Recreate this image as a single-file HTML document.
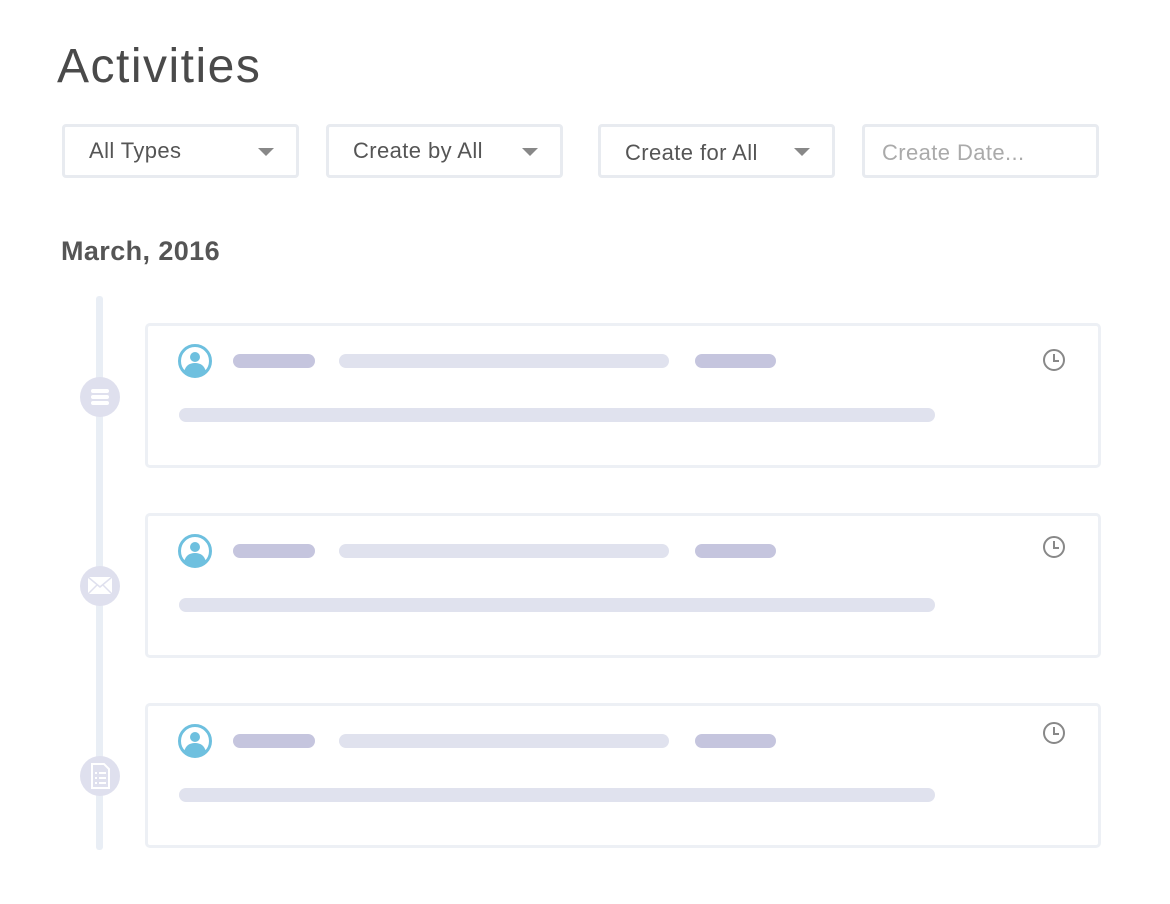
<!DOCTYPE html><html><head><style>
body{margin:0;width:1170px;height:904px;background:#fff;font-family:"Liberation Sans",sans-serif;position:relative;overflow:hidden}
.a{position:absolute}
h1{position:absolute;left:57px;top:39px;margin:0;font-size:48px;font-weight:normal;color:#4a4a4a;letter-spacing:1.5px}
.dd{position:absolute;top:124px;width:231px;height:48px;border:3px solid #e8ebf0;border-radius:4px;font-size:22px;color:#555;line-height:48px;box-sizing:content-box;letter-spacing:0.4px}
.dd span{position:absolute;left:24px}
.dd i{position:absolute;right:22px;top:21px;border-left:8px solid transparent;border-right:8px solid transparent;border-top:8px solid #888}
.card{position:absolute;left:145px;width:950px;height:139px;border:3px solid #edf0f5;border-radius:5px}
.bar{position:absolute;height:14px;border-radius:7px}
.d{background:#c5c5de}.l{background:#e0e2ee}
.dot{position:absolute;left:80px;width:40px;height:40px;border-radius:50%;background:#dfe0ee}
</style></head><body>
<h1>Activities</h1>
<div class="dd" style="left:62px"><span>All Types</span><i></i></div>
<div class="dd" style="left:326px"><span>Create by All</span><i></i></div>
<div class="dd" style="left:598px"><span style="top:2px">Create for All</span><i></i></div>
<div class="dd" style="left:862px;color:#aaa"><span style="left:17px;top:2px">Create Date...</span></div>
<div class="a" style="left:61px;top:236px;font-size:27px;font-weight:bold;color:#555;letter-spacing:0.4px">March, 2016</div>
<div class="a" style="left:96px;top:296px;width:7px;height:554px;background:#e9eef5;border-radius:3px"></div>
<div class="dot" style="top:377px"><svg width="40" height="40"><g stroke="#fff" stroke-width="4" stroke-linecap="round"><line x1="13" y1="14" x2="27" y2="14"/><line x1="13" y1="20" x2="27" y2="20"/><line x1="13" y1="26" x2="27" y2="26"/></g></svg></div>
<div class="dot" style="top:566px"><svg width="40" height="40"><rect x="8" y="11" width="24" height="17" fill="#fff"/><path d="M8 11 L20 21 L32 11 M8 28 L17 19 M32 28 L23 19" stroke="#dfe0ee" stroke-width="1.5" fill="none"/></svg></div>
<div class="dot" style="top:756px"><svg width="40" height="40"><path d="M12 8 H24 L29 13 V32 H12 Z" fill="none" stroke="#fff" stroke-width="2"/><g stroke="#fff" stroke-width="2"><line x1="15" y1="17" x2="17" y2="17"/><line x1="19" y1="17" x2="26" y2="17"/><line x1="15" y1="22" x2="17" y2="22"/><line x1="19" y1="22" x2="26" y2="22"/><line x1="15" y1="27" x2="17" y2="27"/><line x1="19" y1="27" x2="26" y2="27"/></g></svg></div>
<div class="card" style="top:323px"></div>
<div class="card" style="top:513px"></div>
<div class="card" style="top:703px"></div>
<svg class="a" style="left:177px;top:343px" width="36" height="36"><circle cx="18" cy="18" r="15.5" fill="#fff" stroke="#6ec0df" stroke-width="3"/><circle cx="18" cy="14" r="5" fill="#6ec0df"/><path d="M7 29 Q9 20 18 20 Q27 20 29 29 Q24 33 18 33 Q12 33 7 29Z" fill="#6ec0df"/></svg>
<svg class="a" style="left:177px;top:533px" width="36" height="36"><circle cx="18" cy="18" r="15.5" fill="#fff" stroke="#6ec0df" stroke-width="3"/><circle cx="18" cy="14" r="5" fill="#6ec0df"/><path d="M7 29 Q9 20 18 20 Q27 20 29 29 Q24 33 18 33 Q12 33 7 29Z" fill="#6ec0df"/></svg>
<svg class="a" style="left:177px;top:723px" width="36" height="36"><circle cx="18" cy="18" r="15.5" fill="#fff" stroke="#6ec0df" stroke-width="3"/><circle cx="18" cy="14" r="5" fill="#6ec0df"/><path d="M7 29 Q9 20 18 20 Q27 20 29 29 Q24 33 18 33 Q12 33 7 29Z" fill="#6ec0df"/></svg>
<div class="bar d" style="left:233px;top:354px;width:82px"></div><div class="bar l" style="left:339px;top:354px;width:330px"></div><div class="bar d" style="left:695px;top:354px;width:81px"></div><div class="bar l" style="left:179px;top:408px;width:756px"></div>
<div class="bar d" style="left:233px;top:544px;width:82px"></div><div class="bar l" style="left:339px;top:544px;width:330px"></div><div class="bar d" style="left:695px;top:544px;width:81px"></div><div class="bar l" style="left:179px;top:598px;width:756px"></div>
<div class="bar d" style="left:233px;top:734px;width:82px"></div><div class="bar l" style="left:339px;top:734px;width:330px"></div><div class="bar d" style="left:695px;top:734px;width:81px"></div><div class="bar l" style="left:179px;top:788px;width:756px"></div>
<svg class="a" style="left:1042px;top:348px" width="24" height="24"><circle cx="12" cy="12" r="10" fill="none" stroke="#888" stroke-width="2"/><path d="M12 6V13H17" fill="none" stroke="#888" stroke-width="2"/></svg>
<svg class="a" style="left:1042px;top:535px" width="24" height="24"><circle cx="12" cy="12" r="10" fill="none" stroke="#888" stroke-width="2"/><path d="M12 6V13H17" fill="none" stroke="#888" stroke-width="2"/></svg>
<svg class="a" style="left:1042px;top:721px" width="24" height="24"><circle cx="12" cy="12" r="10" fill="none" stroke="#888" stroke-width="2"/><path d="M12 6V13H17" fill="none" stroke="#888" stroke-width="2"/></svg>
</body></html>
